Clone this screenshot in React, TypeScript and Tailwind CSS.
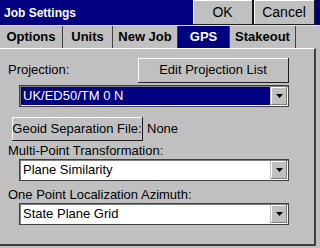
const font = { fontFamily: '"Liberation Sans", Arial, sans-serif' };

function Arrow() {
    return (
        <div className="flex w-[17px] items-center justify-center border-l border-[#c0c0c0] bg-[#c0c0c0] shadow-[inset_-1px_-1px_0_#808080,inset_1px_1px_0_#ffffff]">
            <svg width="7" height="4" viewBox="0 0 7 4">
                <path d="M0 0h7L3.5 4z" fill="#000" />
            </svg>
        </div>
    );
}

function Select({ value, selected }: { value: string; selected?: boolean }) {
    return (
        <div className="ml-[19px] flex h-[22px] w-[270px] border border-[#404040] bg-white shadow-[inset_1px_1px_0_#808080] p-px">
            <div
                className={`flex flex-1 items-center pl-[2px] text-[13px] ${
                    selected ? "bg-[#000080] text-white" : "text-black"
                }`}
            >
                {value}
            </div>
            <Arrow />
        </div>
    );
}

function Tab({ label, active, w }: { label: string; active?: boolean; w: string }) {
    return (
        <div
            className={`flex h-[22px] items-center justify-center border-r border-[#404040] text-[13px] font-bold ${w} ${
                active ? "bg-[#000080] text-white" : "text-black"
            }`}
        >
            {label}
        </div>
    );
}

export default function App() {
    return (
        <div className="h-[248px] w-[320px] overflow-hidden bg-[#c0c0c0]" style={font}>
            <div className="flex h-[25px] bg-[#000080]">
                <div className="flex flex-1 items-center pl-[4px] text-[12px] font-bold text-white">
                    Job Settings
                </div>
                <button className="h-[25px] w-[60px] border-r border-b border-[#202020] bg-[#c0c0c0] text-[14px] shadow-[inset_1px_1px_0_#ffffff]">
                    OK
                </button>
                <button className="ml-px h-[25px] w-[61px] border-r border-b border-[#202020] bg-[#c0c0c0] text-[14px] shadow-[inset_1px_1px_0_#ffffff]">
                    Cancel
                </button>
                <div className="w-[5px]" />
            </div>
            <div className="flex h-[23px] items-end border-t border-[#e0e0e0]">
                <Tab label="Options" w="w-[63px]" />
                <Tab label="Units" w="w-[50px]" />
                <Tab label="New Job" w="w-[65px]" />
                <Tab label="GPS" w="w-[52px]" active />
                <Tab label="Stakeout" w="w-[66px]" />
            </div>
            <div className="mr-[4px] h-[198px] border-t border-white border-r-2 border-r-[#404040] border-b-2 border-b-[#404040]">
                <div className="flex flex-col">
                    <div className="mt-[9px] flex h-[24px] items-center">
                        <div className="pl-[8px] text-[13px] w-[138px]">Projection:</div>
                        <button className="h-[25px] w-[151px] border-r border-b border-[#202020] bg-[#c0c0c0] text-[13px] shadow-[inset_1px_1px_0_#ffffff]">
                            Edit Projection List
                        </button>
                    </div>
                    <div className="mt-[3px]">
                        <Select value="UK/ED50/TM 0 N" selected />
                    </div>
                    <div className="mt-[10px] flex h-[24px] items-center">
                        <button className="ml-[12px] h-[24px] w-[131px] border-r border-b border-[#202020] bg-[#c0c0c0] text-[13px] shadow-[inset_1px_1px_0_#ffffff]">
                            Geoid Separation File:
                        </button>
                        <div className="ml-[4px] text-[13px]">None</div>
                    </div>
                    <div className="mt-[2px] pl-[8px] text-[13px] leading-[16px]">Multi-Point Transformation:</div>
                    <div className="mt-0">
                        <Select value="Plane Similarity" />
                    </div>
                    <div className="mt-[6px] pl-[8px] text-[13px] leading-[16px]">One Point Localization Azimuth:</div>
                    <div className="mt-0">
                        <Select value="State Plane Grid" />
                    </div>
                </div>
            </div>
        </div>
    );
}
